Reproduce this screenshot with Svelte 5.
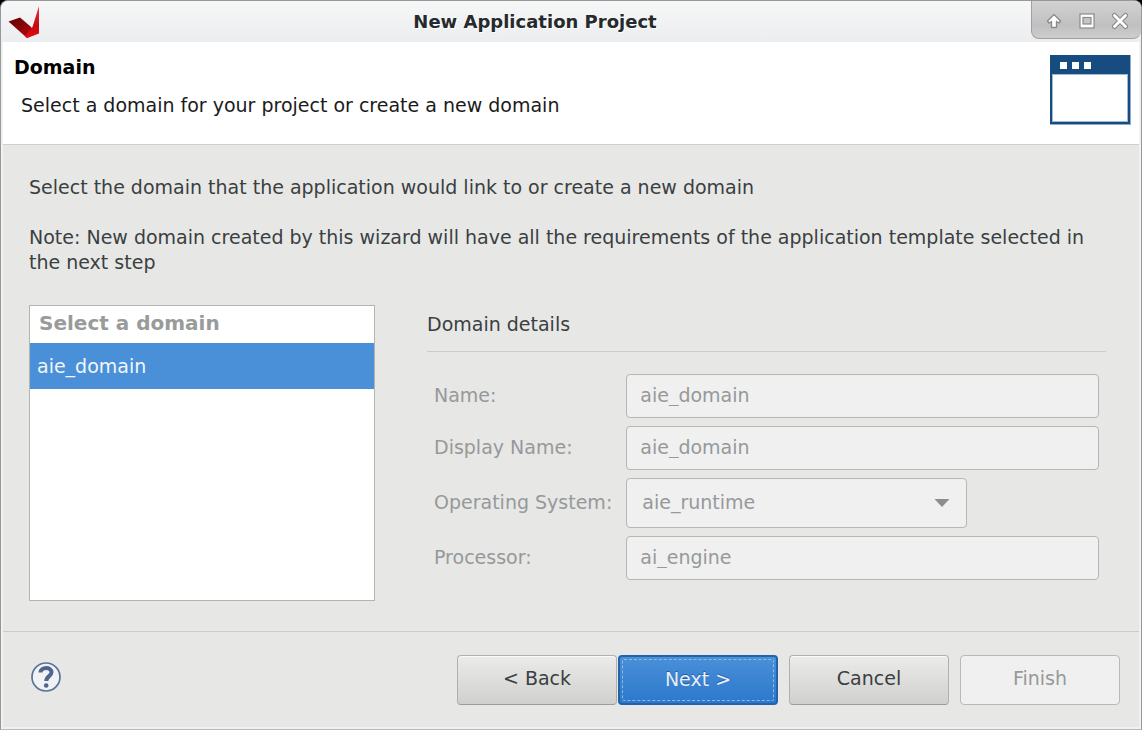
<script>
  const domains = ['aie_domain'];
  let selected = $state('aie_domain');
</script>

<div class="window">
  <div class="titlebar">
    <svg class="logo" width="32" height="32" viewBox="0 0 32 32" aria-hidden="true">
      <defs>
        <linearGradient id="logo-dark" x1="0" y1="0" x2="1" y2="1">
          <stop offset="0" stop-color="#5c0306" />
          <stop offset="0.5" stop-color="#8d0509" />
          <stop offset="1" stop-color="#d6060b" />
        </linearGradient>
        <linearGradient id="logo-bright" x1="0" y1="0" x2="0" y2="1">
          <stop offset="0" stop-color="#f0363c" />
          <stop offset="0.6" stop-color="#c40a10" />
          <stop offset="1" stop-color="#e30a10" />
        </linearGradient>
      </defs>
      <polygon points="0.500,15.500 12,11.500 22.500,20.500 29,27.500 19,32" fill="url(#logo-dark)" />
      <polygon points="31,0 31,27.500 19,32 17,30 24.500,21" fill="url(#logo-bright)" />
    </svg>
    <div class="title">New Application Project</div>
    <div class="controls">
      <button aria-label="Shade">
        <svg width="18" height="18" viewBox="0 0 18 18">
          <path d="M9 2.500 L15.500 9 L14 11 L11.500 9.500 V15.500 H6.500 V9.500 L4 11 L2.500 9 Z" fill="#fff" stroke="#8a8a8a" stroke-width="1.400" stroke-linejoin="round" />
        </svg>
      </button>
      <button aria-label="Maximize">
        <svg width="18" height="18" viewBox="0 0 18 18">
          <rect x="2" y="2" width="14" height="14" fill="#fff" stroke="#8a8a8a" stroke-width="1.200" />
          <rect x="5" y="5.500" width="8" height="6.500" fill="#c4c4c4" stroke="#8a8a8a" stroke-width="1.200" />
        </svg>
      </button>
      <button aria-label="Close">
        <svg width="18" height="18" viewBox="0 0 18 18">
          <path d="M3.500 3.500 L14.500 14.500 M14.500 3.500 L3.500 14.500" stroke="#8a8a8a" stroke-width="5" stroke-linecap="round" />
          <path d="M3.500 3.500 L14.500 14.500 M14.500 3.500 L3.500 14.500" stroke="#fff" stroke-width="2.800" stroke-linecap="round" />
        </svg>
      </button>
    </div>
  </div>

  <header>
    <div>
      <h1>Domain</h1>
      <p>Select a domain for your project or create a new domain</p>
    </div>
    <svg class="banner" width="82" height="72" viewBox="0 0 82 72" aria-hidden="true">
      <rect x="1" y="1" width="81" height="70" fill="#8eabc8" />
      <rect x="1" y="1" width="80" height="69" fill="#174c80" />
      <rect x="3" y="20" width="76" height="48" fill="#a3b9d0" />
      <rect x="4" y="21" width="74" height="46" fill="#fff" />
      <rect x="11" y="8" width="7" height="7" fill="#fff" />
      <rect x="23" y="8" width="7" height="7" fill="#fff" />
      <rect x="35" y="8" width="7" height="7" fill="#fff" />
    </svg>
  </header>

  <main>
    <p>Select the domain that the application would link to or create a new domain</p>
    <p>Note: New domain created by this wizard will have all the requirements of the application template selected in the next step</p>

    <div class="columns">
      <div class="list">
        <div class="list-head">Select a domain</div>
        {#each domains as domain}
          <button class="item" class:selected={selected === domain} onclick={() => (selected = domain)}>{domain}</button>
        {/each}
      </div>

      <section>
        <h2>Domain details</h2>
        <div class="fields">
          <label for="name">Name:</label>
          <input id="name" type="text" value={selected} disabled />
          <label for="display">Display Name:</label>
          <input id="display" type="text" value={selected} disabled />
          <label for="os">Operating System:</label>
          <div class="dropdown">
            <select id="os" disabled><option>aie_runtime</option></select>
            <svg width="16" height="8" viewBox="0 0 16 8" aria-hidden="true"><path d="M0.500 0 H15.500 L8 8 Z" fill="#8b8e8f" /></svg>
          </div>
          <label for="processor">Processor:</label>
          <input id="processor" type="text" value="ai_engine" disabled />
        </div>
      </section>
    </div>
  </main>

  <footer>
    <button class="help" aria-label="Help">
      <svg width="32" height="32" viewBox="0 0 32 32">
        <circle cx="16" cy="16" r="14" fill="#f1f2f3" stroke="#5b7398" stroke-width="1.700" />
        <path d="M10.500 11.500 C10.800 5.600 21.500 5.400 21.500 11.300 C21.500 15.200 16.300 15.200 16.300 20" fill="none" stroke="#4f648e" stroke-width="4" />
        <circle cx="16.200" cy="24.500" r="2.300" fill="#4f648e" />
      </svg>
    </button>
    <div class="pair">
      <button class="action">&lt; Back</button>
      <button class="action primary"><span>Next &gt;</span></button>
    </div>
    <button class="action">Cancel</button>
    <button class="action" disabled>Finish</button>
  </footer>
</div>

<style>
  :global(body) {
    margin: 0;
    background: #000;
  }
  .window {
    box-sizing: border-box;
    min-height: 100vh;
    display: flex;
    flex-direction: column;
    padding: 0 2px 2px;
    border: 1px solid #98989b;
    border-bottom-color: #b8b8b8;
    border-radius: 8px 8px 0 0;
    background: #f0f1f1;
    color: #3a3f42;
    font: 19px/25px "DejaVu Sans", sans-serif;
    overflow: hidden;
  }
  button,
  input,
  select {
    box-sizing: border-box;
    margin: 0;
    font: inherit;
  }
  h1,
  h2,
  p {
    margin: 0;
  }
  .titlebar {
    display: grid;
    grid-template-columns: 110px 1fr 110px;
    height: 41px;
    margin: 0 -2px;
    background: linear-gradient(#f6f7f7, #ebedef);
  }
  .logo {
    margin: 5px 0 0 7px;
  }
  .title {
    align-self: center;
    padding-right: 72px;
    text-align: center;
    font-size: 18px;
    font-weight: bold;
    color: #262a2c;
    text-shadow: 1px 1px #fff;
  }
  .controls {
    display: flex;
    align-items: center;
    justify-content: center;
    gap: 15px;
    height: 38px;
    box-sizing: border-box;
    padding-top: 2px;
    border: solid #a0a0a0;
    border-width: 0 0 1px 1px;
    border-radius: 0 0 8px 8px;
    background: linear-gradient(#d2d2d2, #bfc0bf 65%, #cdcdcd);
  }
  .controls button,
  .help {
    display: flex;
    padding: 0;
    border: 0;
    background: none;
  }
  header {
    display: flex;
    justify-content: space-between;
    padding: 12px 8px 18px 11px;
    border-bottom: 1px solid #cfcfcf;
    background: #fff;
    color: #1b1b1b;
  }
  h1 {
    padding-top: 1px;
    font-size: 19px;
    line-height: 25px;
    color: #000;
  }
  header p {
    padding: 13px 0 0 7px;
  }
  main {
    display: flex;
    flex: 1;
    flex-direction: column;
    gap: 25px;
    padding: 30px 33px 30px 26px;
    background: #e7e7e5;
  }
  .columns {
    display: grid;
    grid-template-columns: 346fr 679fr;
    gap: 52px;
    flex: 1;
    padding-top: 5px;
  }
  .list {
    box-sizing: border-box;
    min-height: 296px;
    border: 1px solid #b4b5b1;
    background: #fff;
  }
  .list-head {
    padding: 5px 9px 7px;
    font-size: 20px;
    font-weight: bold;
    color: #999b9b;
  }
  .item {
    display: block;
    width: 100%;
    height: 46px;
    padding: 0 7px;
    border: 0;
    background: #fff;
    color: #3a3f42;
    text-align: left;
  }
  .item.selected {
    background: #4a90d9;
    color: #f2f6fb;
  }
  h2 {
    padding: 7px 0 14px;
    border-bottom: 1px solid #cbccca;
    font-size: 19px;
    font-weight: normal;
    line-height: 25px;
  }
  .fields {
    display: grid;
    grid-template-columns: auto 1fr;
    align-items: center;
    gap: 8px 14px;
    padding: 22px 7px 0;
    color: #96999a;
  }
  label {
    padding-bottom: 2px;
  }
  input,
  select {
    width: 100%;
    height: 44px;
    padding: 0 13px 2px;
    border: 1px solid #b6b7b3;
    border-radius: 4px;
    background: #f0f0f0;
    color: #96999a;
    opacity: 1;
  }
  .dropdown {
    display: grid;
    align-items: center;
    width: 72%;
  }
  .dropdown select {
    grid-area: 1 / 1;
    height: 50px;
    padding: 0 15px 2px;
    appearance: none;
  }
  .dropdown svg {
    grid-area: 1 / 1;
    justify-self: end;
    margin-right: 17px;
    pointer-events: none;
  }
  footer {
    display: flex;
    align-items: center;
    gap: 11px;
    padding: 23px 19px 22px 27px;
    border-top: 1px solid #cbccca;
    background: #e7e7e5;
  }
  .help {
    margin-right: auto;
    margin-bottom: 6px;
  }
  .pair {
    display: flex;
    gap: 1px;
  }
  .action {
    width: 160px;
    height: 50px;
    padding: 0 0 3px;
    border: 1px solid #b0b1ae;
    border-bottom-color: #9b9c99;
    border-radius: 4px;
    background: linear-gradient(#ebebe9, #d0d0ce);
    box-shadow: inset 0 1px #fafafa;
    color: #3a3f42;
  }
  .action:disabled {
    border-color: #b9bab7;
    background: #f0f0f0;
    box-shadow: none;
    color: #96999a;
  }
  .primary {
    padding: 2px;
    border: 2px solid #2363a7;
    background: linear-gradient(#4a90d9, #2c78cb);
    box-shadow: none;
    color: #e8f0fa;
    text-shadow: 0 -1px #245c98;
  }
  .primary span {
    display: flex;
    align-items: center;
    justify-content: center;
    box-sizing: border-box;
    height: 100%;
    padding-bottom: 2px;
    border: 1px dashed #8db9e6;
    border-radius: 2px;
  }
</style>
